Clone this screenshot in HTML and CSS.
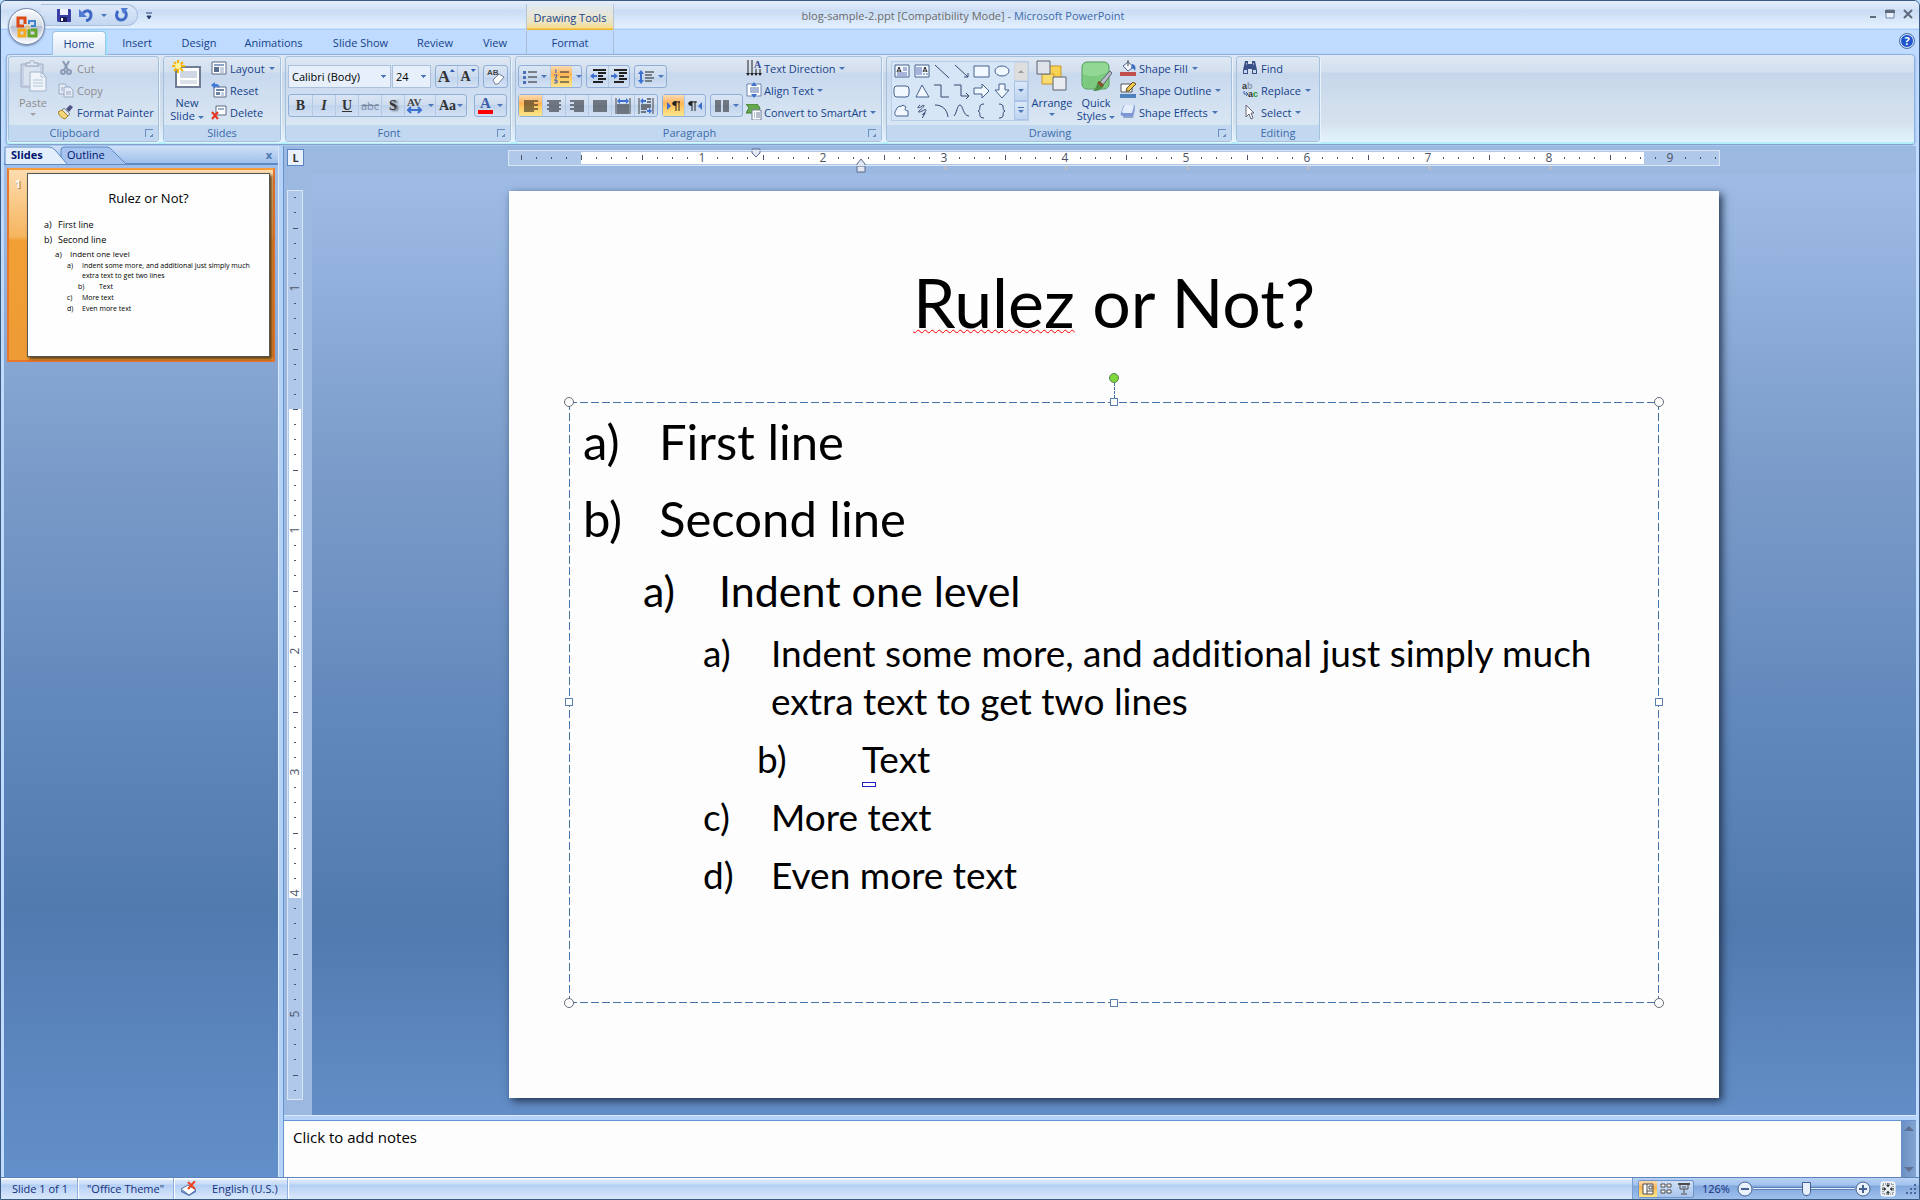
FILE: index.html
```html
<!DOCTYPE html>
<html lang="en">
<head>
    <meta charset="UTF-8">
    <meta name="viewport" content="width=device-width, initial-scale=1.0">
    <title>blog-sample-2.ppt [Compatibility Mode] - Microsoft PowerPoint</title>
    <link rel="stylesheet" href="styles.css">
</head>
<body>
<div class="window">
    <header class="titlebar">
        <div class="qat">
            <button class="icon-btn" aria-label="Save">
                <svg width="14" height="14" viewBox="0 0 14 14"><path d="M0 1h13l1 1v12H1l-1-1z" fill="#3a3fa5"/><path d="M3 1h8v6H3z" fill="#eef3ff"/><path d="M3 9h7v5H3z" fill="#1c1e55"/><path d="M4 10h2v3H4z" fill="#fff"/></svg>
            </button>
            <button class="icon-btn" aria-label="Undo">
                <svg width="14" height="14" viewBox="0 0 14 14"><path d="M4 5c4-4 8-2 8 2 0 3-2 5-5 6" fill="none" stroke="#3f69c4" stroke-width="3"/><path d="M0 1v8h8z" fill="#4f7bd2"/></svg>
            </button>
            <span class="arrow"></span>
            <button class="icon-btn" aria-label="Repeat">
                <svg width="13" height="14" viewBox="0 0 13 14"><path d="M3 3c-3 4-1 9 3 9s7-4 4-9" fill="none" stroke="#3f69c4" stroke-width="3"/><path d="M6 0h7l-5 6z" fill="#4f7bd2"/></svg>
            </button>
        </div>
        <button class="icon-btn qat-more" aria-label="Customize Quick Access Toolbar">
            <svg width="6" height="8" viewBox="0 0 6 8"><path d="M0 1h6M1 4h4L3 7z" stroke="#25416f" fill="#25416f"/></svg>
        </button>
        <div class="context-title">Drawing Tools</div>
        <h1 class="doc-title">blog-sample-2.ppt [Compatibility Mode] - <span>Microsoft PowerPoint</span></h1>
        <div class="window-buttons">
            <button class="icon-btn" aria-label="Minimize"><svg width="8" height="10" viewBox="0 0 8 10"><path d="M1 8h6" stroke="#616b7c" stroke-width="2"/></svg></button>
            <button class="icon-btn" aria-label="Maximize"><svg width="10" height="10" viewBox="0 0 10 10"><path d="M1 1h8v8H1z" fill="#e8f1fc" stroke="#7189ab"/><path d="M0 1h10v3H0z" fill="#616b7c"/></svg></button>
            <button class="icon-btn" aria-label="Close"><svg width="10" height="10" viewBox="0 0 10 10"><path d="M1 1l8 8M9 1L1 9" stroke="#616b7c" stroke-width="2"/></svg></button>
        </div>
    </header>

    <button class="office-button" aria-label="Office Button">
        <svg width="22" height="24" viewBox="0 0 22 24" fill="none" stroke-width="3">
            <path d="M9 9V3H2v8h6" stroke="#dc4a14"/>
            <path d="M13 9V6h6v5h-4" stroke="#3f86cf" stroke-width="2"/>
            <path d="M9 14v7H3v-6h6" stroke="#f5a81c"/>
            <path d="M13 14v7h7v-6h-5" stroke="#63a52a"/>
            <path d="M10 11h3v3h-3z" stroke="#f6c65a" stroke-width="1"/>
        </svg>
    </button>

    <nav class="tabs">
        <a href="#" class="tab tab-active">Home</a>
        <a href="#" class="tab">Insert</a>
        <a href="#" class="tab">Design</a>
        <a href="#" class="tab tab-wide">Animations</a>
        <a href="#" class="tab tab-wide">Slide Show</a>
        <a href="#" class="tab">Review</a>
        <a href="#" class="tab tab-view">View</a>
        <a href="#" class="tab tab-format">Format</a>
        <button class="help" aria-label="Help">?</button>
    </nav>

    <div class="ribbon">
        <section class="group clipboard">
            <div class="group-body">
                <button class="big disabled">
                    <svg width="28" height="32" viewBox="0 0 28 32"><path d="M2 4h22v23H2z" fill="#c6d2e3" stroke="#a2b0c6"/><path d="M5 7h16v18H5z" fill="#d9e3f0"/><path d="M7 6V3h4c0-4 4-4 4 0h4v3z" fill="#dfe8f2" stroke="#95a6bf"/><path d="M11 12h11l5 5v14H11z" fill="#eff4fa" stroke="#a5b4ca"/><path d="M22 12v5h5M14 20h10M14 23h10M14 26h10" fill="none" stroke="#b6c4d8"/></svg>
                    <span>Paste</span><span class="arrow"></span>
                </button>
                <div class="stack">
                    <button class="small disabled"><svg width="16" height="16" viewBox="0 0 16 16" fill="none" stroke="#8b9bb5"><path d="M5 1l5 9M11 1L6 10" stroke-width="2"/><circle cx="5" cy="12" r="2" stroke-width="2"/><circle cx="11" cy="12" r="2" stroke-width="2"/></svg>Cut</button>
                    <button class="small disabled"><svg width="16" height="16" viewBox="0 0 16 16" fill="#e4ebf4" stroke="#9aabc4"><path d="M1 2h6l3 3v7H1z"/><path d="M6 5h6l3 3v7H6zM8 10h5M8 12h5M3 6h2M3 8h2"/></svg>Copy</button>
                    <button class="small"><svg width="16" height="16" viewBox="0 0 16 16"><path d="M12 1l3 2-4 5-3-3z" fill="#4b5387"/><path d="M6 4l6 6-2 2-6-6z" fill="#dde3ea" stroke="#7c8592"/><path d="M4 6l6 6-3 3C3 14 1 11 0 8z" fill="#f4d77d" stroke="#a77f29"/></svg>Format Painter</button>
                </div>
            </div>
            <footer>Clipboard<button class="launcher" aria-label="Clipboard options"></button></footer>
        </section>

        <section class="group slides">
            <div class="group-body">
                <button class="big">
                    <svg width="30" height="32" viewBox="0 0 30 32"><path d="M4 7h24v20H4z" fill="#fff" stroke="#6f7e95" stroke-width="2"/><path d="M8 11h17v7H8z" fill="#cfd7e5"/><path d="M8 21h17M8 23h17" stroke="#b9c3d4"/><path d="M6 0v13M0 6h13M2 2l9 9M11 2l-9 9" stroke="#f3b400" stroke-width="2"/><circle cx="6" cy="6" r="3" fill="#fff3a0"/></svg>
                    <span>New</span><span>Slide <i class="arrow"></i></span>
                </button>
                <div class="stack">
                    <button class="small"><svg width="16" height="16" viewBox="0 0 16 16"><path d="M1 2h14v12H1z" fill="#fff" stroke="#5b6b85"/><path d="M3 4h10v2H3z" fill="#8da2c4"/><path d="M3 7h5v5H3z" fill="#5c6f92"/><path d="M9 8h4M9 10h4M9 12h4" stroke="#8da2c4"/></svg>Layout<i class="arrow"></i></button>
                    <button class="small"><svg width="16" height="16" viewBox="0 0 16 16"><path d="M3 5h12v10H3z" fill="#fff" stroke="#5b6b85"/><path d="M5 7h8v2H5zM5 10h4v3H5z" fill="#6e82a6"/><path d="M10 11h3M10 13h3" stroke="#8da2c4"/><path d="M0 3l4-3v2c4 0 5 2 4 4-1-1-2-2-4-1v2z" fill="#3f76d8"/></svg>Reset</button>
                    <button class="small"><svg width="16" height="16" viewBox="0 0 16 16"><path d="M5 2h10v9H5z" fill="#fff" stroke="#5b6b85"/><path d="M7 4h6v2H7z" fill="#9fb0cb"/><path d="M1 8l6 7M7 8l-6 7" stroke="#e8341c" stroke-width="2"/></svg>Delete</button>
                </div>
            </div>
            <footer>Slides</footer>
        </section>

        <section class="group font">
            <div class="group-body rows">
                <div class="row">
                    <select class="font-name" aria-label="Font"><option>Calibri (Body)</option></select>
                    <select class="font-size" aria-label="Font size"><option>24</option></select>
                    <div class="btns push narrow">
                        <button class="serif grow">A<svg width="5" height="4" viewBox="0 0 5 4"><path d="M0 3l2-3 3 3z" fill="#2f5fb0"/></svg></button>
                        <button class="serif shrink">A<svg width="5" height="4" viewBox="0 0 5 4"><path d="M0 0h5L2 3z" fill="#2f5fb0"/></svg></button>
                    </div>
                    <div class="btns">
                        <button aria-label="Clear formatting"><svg width="18" height="17" viewBox="0 0 18 17"><text x="0" y="7" font-family="Liberation Sans" font-size="8" font-weight="bold" fill="#444">AB</text><path d="M6 12l6-6 5 3-6 7H8z" fill="#fff" stroke="#71819c"/></svg></button>
                    </div>
                </div>
                <div class="row">
                    <div class="btns">
                        <button class="serif">B</button>
                        <button class="serif"><i>I</i></button>
                        <button class="serif"><u>U</u></button>
                        <button class="strike"><s>abc</s></button>
                        <button class="serif glow">S</button>
                        <button class="wide serif" aria-label="Character spacing"><svg width="18" height="17" viewBox="0 0 18 17"><text x="1" y="9" font-family="Liberation Serif" font-size="11" font-weight="bold" fill="#444">AV</text><path d="M3 13h11M5 10l-3 3 3 3M12 10l3 3-3 3" fill="none" stroke="#3b6fd0" stroke-width="2"/></svg><i class="arrow"></i></button>
                        <button class="wide serif aa">Aa<i class="arrow"></i></button>
                    </div>
                    <div class="btns push">
                        <button class="wide font-color serif"><span>A</span><i class="arrow"></i></button>
                    </div>
                </div>
            </div>
            <footer>Font<button class="launcher" aria-label="Font options"></button></footer>
        </section>

        <section class="group paragraph">
            <div class="group-body">
                <div class="rows">
                    <div class="row">
                        <div class="btns">
                            <button class="wide" aria-label="Bullets"><svg width="14" height="14" viewBox="0 0 14 14"><path d="M5 2h9M5 7h9M5 12h9" stroke="#222"/><path d="M0 1h3v3H0zM0 6h3v3H0zM0 11h3v3H0z" fill="#4c6fb8"/></svg><i class="arrow"></i></button>
                            <button class="wide split" aria-label="Numbering"><span class="on"><svg width="15" height="15" viewBox="0 0 15 15"><path d="M6 3h9M6 8h9M6 13h9" stroke="#222"/><path d="M1 1h1v3M0 6h3v1L1 9h2M0 11h3v3H0M1 12h2" fill="none" stroke="#3c62b5"/></svg></span><i class="arrow"></i></button>
                        </div>
                        <div class="btns narrow">
                            <button aria-label="Decrease indent"><svg width="16" height="16" viewBox="0 0 16 16"><path d="M3 1h13M8 4h8M8 7h5M8 10h8M3 13h10" stroke="#222" stroke-width="2"/><path d="M0 7l4-3v2h3v2H4v2z" fill="#3b6fd0"/></svg></button>
                            <button aria-label="Increase indent"><svg width="16" height="16" viewBox="0 0 16 16"><path d="M3 1h13M8 4h8M8 7h5M8 10h8M3 13h10" stroke="#222" stroke-width="2"/><path d="M7 7L3 4v2H0v2h3v2z" fill="#3b6fd0"/></svg></button>
                        </div>
                        <div class="btns">
                            <button class="wide" aria-label="Line spacing"><svg width="16" height="16" viewBox="0 0 16 16"><path d="M7 3h9M7 6h7M7 9h9M7 12h7" stroke="#222"/><path d="M0 5l3-4 3 4H4v6h2l-3 4-3-4h2V5z" fill="#3b6fd0"/></svg><i class="arrow"></i></button>
                        </div>
                    </div>
                    <div class="row">
                        <div class="btns">
                            <button class="on" aria-label="Align left"><svg width="14" height="12" viewBox="0 0 14 12"><path d="M0 1h14M0 3h10M0 5h14M0 7h10M0 9h14M0 11h10" stroke="#111"/></svg></button>
                            <button aria-label="Center"><svg width="14" height="12" viewBox="0 0 14 12"><path d="M0 1h14M2 3h10M0 5h14M2 7h10M0 9h14M2 11h10" stroke="#111"/></svg></button>
                            <button aria-label="Align right"><svg width="14" height="12" viewBox="0 0 14 12"><path d="M0 1h14M4 3h10M0 5h14M4 7h10M0 9h14M4 11h10" stroke="#111"/></svg></button>
                            <button aria-label="Justify"><svg width="14" height="12" viewBox="0 0 14 12"><path d="M0 1h14M0 3h14M0 5h14M0 7h14M0 9h14M0 11h14" stroke="#111"/></svg></button>
                            <button aria-label="Distribute"><svg width="16" height="16" viewBox="0 0 16 16"><path d="M1 0v16M15 0v16" stroke="#444"/><path d="M2 7h12M2 9h12M2 11h12M2 13h12M2 15h12" stroke="#111"/><path d="M2 3l3-3v2h6V0l3 3-3 3V4H5v2z" fill="#3b6fd0"/></svg></button>
                            <button aria-label="Low justify"><svg width="16" height="16" viewBox="0 0 16 16"><path d="M1 0v16M15 0v16" stroke="#444"/><path d="M9 1h4M9 4h4M3 7h10M3 9h10M3 11h6M3 14h5" stroke="#111"/><path d="M2 3l3-3v2h3v2H5v2zM14 13l-3-3v2H9v2h2v2z" fill="#3b6fd0"/></svg></button>
                        </div>
                        <div class="btns narrow">
                            <button class="on" aria-label="Left to right"><svg width="14" height="12" viewBox="0 0 14 12"><path d="M0 2l4 4-4 4z" fill="#3b6fd0"/><path d="M9 1v10M12 1v10M7 2h6" stroke="#222"/><path d="M9 1C4 1 4 6 9 6z" fill="#222"/></svg></button>
                            <button aria-label="Right to left"><svg width="14" height="12" viewBox="0 0 14 12"><path d="M14 2l-4 4 4 4z" fill="#3b6fd0"/><path d="M4 1v10M7 1v10M3 2h6" stroke="#222"/><path d="M4 1C-1 1-1 6 4 6z" fill="#222"/></svg></button>
                        </div>
                        <div class="btns">
                            <button class="wide" aria-label="Columns"><svg width="14" height="12" viewBox="0 0 14 12"><path d="M0 1h6M0 3h6M0 5h6M0 7h6M0 9h6M0 11h6M8 1h6M8 3h6M8 5h6M8 7h6M8 9h6M8 11h6" stroke="#111"/></svg><i class="arrow"></i></button>
                        </div>
                    </div>
                </div>
                <div class="stack">
                    <button class="small"><svg width="16" height="16" viewBox="0 0 16 16"><path d="M2 0v15M6 0v15M10 9v6M14 9v6" stroke="#222"/><path d="M0 13h4l-2 3zM4 13h4l-2 3zM8 13h4l-2 3zM12 13h4l-2 3z" fill="#222"/><text x="8" y="8" font-family="Liberation Serif" font-size="10" font-weight="bold" fill="#3a4a90">A</text></svg>Text Direction<i class="arrow"></i></button>
                    <button class="small"><svg width="16" height="16" viewBox="0 0 16 16"><path d="M1 2h14v12H1z" fill="#fff" stroke="#6f86b0"/><path d="M4 6h9M4 8h9M4 10h9" stroke="#5470ae"/><path d="M8 0l3 4H5zM8 16l3-4H5z" fill="#3b6fd0"/></svg>Align Text<i class="arrow"></i></button>
                    <button class="small"><svg width="16" height="16" viewBox="0 0 16 16"><path d="M0 0h11l3 4-3 5H0l3-5z" fill="#69a94e" stroke="#3f7d35"/><path d="M6 6h9v10H6z" fill="#fff" stroke="#70809a"/><path d="M8 9h1M8 11h1M8 13h1M10 9h4M10 11h4M10 13h4" stroke="#70809a"/></svg>Convert to SmartArt<i class="arrow"></i></button>
                </div>
            </div>
            <footer>Paragraph<button class="launcher" aria-label="Paragraph options"></button></footer>
        </section>

        <section class="group drawing">
            <div class="group-body">
                <div class="gallery">
                    <div class="shapes">
                        <svg viewBox="0 0 20 20"><path d="M3 4h14v12H3z"/><path d="M11 7h4M11 9h4M5 12h10M5 14h10" stroke="#5c6fb5"/><path d="M5 11l2-5 2 5M6 10h3" stroke="#222"/></svg>
                        <svg viewBox="0 0 20 20"><path d="M3 4h14v12H3z"/><path d="M5 6v8M7 6v8M9 6v8M12 12v2M15 12v2" stroke="#5c6fb5"/><path d="M11 11l2-5 2 5M12 10h3" stroke="#222"/></svg>
                        <svg viewBox="0 0 20 20"><path d="M3 4l14 13" class="line"/></svg>
                        <svg viewBox="0 0 20 20"><path d="M3 4l13 12M16 12v4h-4" class="line"/></svg>
                        <svg viewBox="0 0 20 20"><path d="M2 5h15v11H2z"/></svg>
                        <svg viewBox="0 0 20 20"><ellipse cx="10" cy="10" rx="7" ry="5"/></svg>
                        <svg viewBox="0 0 20 20"><rect x="2" y="5" width="15" height="11" rx="3"/></svg>
                        <svg viewBox="0 0 20 20"><path d="M10 4l7 12H4z"/></svg>
                        <svg viewBox="0 0 20 20"><path d="M2 4h7v12h8" class="line"/></svg>
                        <svg viewBox="0 0 20 20"><path d="M2 4h7v11h8M14 12l3 3-3 3" class="line"/></svg>
                        <svg viewBox="0 0 20 20"><path d="M2 7h8V3l7 7-7 7v-4H2z"/></svg>
                        <svg viewBox="0 0 20 20"><path d="M7 3h6v6h4l-7 8-7-8h4z"/></svg>
                        <svg viewBox="0 0 20 20"><path d="M4 9c1-3 3-4 6-4l1-1 3 2c-2 3-1 3 2 4v5H4c-2-2-1-4 0-6z"/></svg>
                        <svg viewBox="0 0 20 20"><path d="M8 4c-4 3-2 4 2 1 4-2 2 1-3 5-2 2 2 1 5-1 4-2 1 3-1 4s2 1 2-1-1 4-3 5" class="line"/></svg>
                        <svg viewBox="0 0 20 20"><path d="M3 4c7 0 12 4 13 12" class="line"/></svg>
                        <svg viewBox="0 0 20 20"><path d="M2 15C5 12 5 4 8 4s3 11 9 11" class="line"/></svg>
                        <svg viewBox="0 0 20 20"><path d="M12 3c-7 0-2 6-6 7 4 1-1 7 6 7" class="line"/></svg>
                        <svg viewBox="0 0 20 20"><path d="M7 3c7 0 2 6 6 7-4 1 1 7-6 7" class="line"/></svg>
                    </div>
                    <div class="gallery-scroll">
                        <button class="up" aria-label="Previous shapes"><i class="arrow"></i></button>
                        <button aria-label="Next shapes"><i class="arrow"></i></button>
                        <button class="more" aria-label="More shapes"><i class="arrow"></i></button>
                    </div>
                </div>
                <button class="big arrange">
                    <svg width="32" height="32" viewBox="0 0 32 32"><path d="M11 6h14v14H11z" fill="#f7d253" stroke="#c9952c"/><path d="M6 14h12v10H6z" fill="#f9dc70" stroke="#c9952c"/><path d="M1 1h13v13H1z" fill="#dfe3ea" stroke="#5b6270"/><path d="M17 17h13v13H17z" fill="#e9ecf1" stroke="#5b6270"/></svg>
                    <span>Arrange</span><span class="arrow"></span>
                </button>
                <button class="big quick">
                    <svg width="32" height="32" viewBox="0 0 32 32"><rect x="2" y="2" width="27" height="27" rx="5" fill="#93d794" stroke="#4d9a58"/><path d="M3 14c8 4 18 2 25-3v13c0 3-1 4-4 4H7c-3 0-4-1-4-4z" fill="#7bca80"/><path d="M30 11l2 2-9 12-3-3z" fill="#b9bfc8" stroke="#5d6470"/><path d="M20 21l4 4c-2 5-6 6-11 6 4-3 3-8 7-10z" fill="#4e9148"/><path d="M19 21l5 4-2 2-5-4z" fill="#8a4f27"/></svg>
                    <span>Quick</span><span>Styles <i class="arrow"></i></span>
                </button>
                <div class="stack">
                    <button class="small"><svg width="16" height="16" viewBox="0 0 16 16"><path d="M3 6l5-4 6 5-6 4z" fill="#eef3fb" stroke="#55688c"/><path d="M8 0v6" stroke="#444"/><path d="M12 4c4 1 4 4 3 7-1-2-2-3-4-3z" fill="#3f6fc0"/><path d="M0 12h16v4H0z" fill="#c0504d"/></svg>Shape Fill<i class="arrow"></i></button>
                    <button class="small"><svg width="16" height="16" viewBox="0 0 16 16"><path d="M1 2h11v8H1z" fill="#fff" stroke="#555"/><path d="M6 9l1-3 6-6 3 2-7 7z" fill="#f1c84f" stroke="#604a20"/><path d="M0 12h16v4H0z" fill="#4f81bd"/></svg>Shape Outline<i class="arrow"></i></button>
                    <button class="small"><svg width="16" height="16" viewBox="0 0 16 16"><path d="M4 5h11l-2 9H3z" fill="#8fa3cf"/><path d="M5 1h8c2 0 2 1 2 2l-2 7c0 2-1 2-3 2H3c-2 0-3-1-2-3l2-6c0-1 1-2 2-2z" fill="#7d97d6"/><path d="M5 1h8l1 1-2 7H3L2 8l2-6z" fill="#e3ecfb"/></svg>Shape Effects<i class="arrow"></i></button>
                </div>
            </div>
            <footer>Drawing<button class="launcher" aria-label="Drawing options"></button></footer>
        </section>

        <section class="group editing">
            <div class="group-body">
                <div class="stack">
                    <button class="small"><svg width="16" height="16" viewBox="0 0 16 16"><path d="M3 1h3v3h4V1h3l2 9v4h-5V9H6v5H1v-4z" fill="#3a5288"/><path d="M2 10h3v3H2zM11 10h3v3h-3zM4 3h1v3M11 3h1v3" fill="#c8d6ee"/></svg>Find</button>
                    <button class="small"><svg width="16" height="16" viewBox="0 0 16 16"><text x="0" y="7" font-family="Liberation Sans" font-size="9" font-weight="bold" fill="#333">a<tspan fill="#8a97ad">b</tspan></text><text x="6" y="15" font-family="Liberation Sans" font-size="9" font-weight="bold" fill="#333">a<tspan fill="#1f9a2b">c</tspan></text><path d="M2 9v3h3M4 10l2 2-2 2" fill="none" stroke="#3b5fa0"/></svg>Replace<i class="arrow"></i></button>
                    <button class="small"><svg width="16" height="16" viewBox="0 0 16 16"><path d="M4 1l8 8H9l2 5-2 1-2-5-3 3z" fill="#fff" stroke="#667"/></svg>Select<i class="arrow"></i></button>
                </div>
            </div>
            <footer>Editing</footer>
        </section>
    </div>

    <main class="workspace">
        <aside class="side">
            <div class="side-tabs">
                <svg class="side-shape" width="124" height="18" viewBox="0 0 124 18">
                    <path d="M57 18V4q0-3 3-3h43q3 0 5 3l14 14" fill="#a5c3ec" stroke="#5b8ac4"/>
                    <path d="M1 18V1h44q4 0 7 4l11 13" fill="#e3eefc" stroke="#5b8ac4"/>
                </svg>
                <a href="#" class="side-tab current">Slides</a>
                <a href="#" class="side-tab">Outline</a>
                <button class="close" aria-label="Close pane">x</button>
            </div>
            <div class="thumb-row">
                <span class="thumb-no">1</span>
                <div class="thumb">
                    <h3>Rulez or Not?</h3>
                    <ol class="lines">
                        <li class="l1"><span>a)</span>First line</li>
                        <li class="l1"><span>b)</span>Second line</li>
                        <li class="l2"><span>a)</span>Indent one level</li>
                        <li class="l3"><span>a)</span><p>Indent some more, and additional just simply much<br>extra text to get two lines</p></li>
                        <li class="l3 deeper"><span>b)</span>Text</li>
                        <li class="l3"><span>c)</span>More text</li>
                        <li class="l3"><span>d)</span>Even more text</li>
                    </ol>
                </div>
            </div>
        </aside>

        <div class="editor">
            <div class="canvas">
                <div class="corner"><span>L</span></div>
                <div class="ruler-x-track"><svg id="rulerX" class="ruler-x" viewBox="0 0 1210 14"></svg></div>
                <div class="ruler-y-track"><svg id="rulerY" class="ruler-y" viewBox="0 0 14 908"></svg></div>
                <div class="stage">
                    <article class="slide">
                        <h2><span class="misspelled">Rulez</span> or Not?</h2>
                        <div class="textbox">
                            <ol class="lines">
                                <li class="l1"><span>a)</span>First line</li>
                                <li class="l1"><span>b)</span>Second line</li>
                                <li class="l2"><span>a)</span>Indent one level</li>
                                <li class="l3"><span>a)</span><p>Indent some more, and additional just simply much<br>extra text to get two lines</p></li>
                                <li class="l3 deeper"><span>b)</span><p class="tagged">Text</p></li>
                                <li class="l3"><span>c)</span>More text</li>
                                <li class="l3"><span>d)</span>Even more text</li>
                            </ol>
                            <i class="handle round nw"></i><i class="handle n"></i><i class="handle round ne"></i>
                            <i class="handle w"></i><i class="handle e"></i>
                            <i class="handle round sw"></i><i class="handle s"></i><i class="handle round se"></i>
                            <i class="rotate"></i>
                        </div>
                    </article>
                </div>
            </div>
            <div class="notes">
                <textarea aria-label="Notes">Click to add notes</textarea>
                <div class="notes-scroll"><i class="tri up"></i><i class="tri"></i></div>
            </div>
        </div>
    </main>

    <footer class="status">
        <span class="cell">Slide 1 of 1</span>
        <span class="cell">"Office Theme"</span>
        <span class="cell lang"><svg width="17" height="15" viewBox="0 0 17 15"><path d="M1 8l7-4 8 5-7 5z" fill="#fff" stroke="#56709f"/><path d="M1 9v2l8 4 7-4V9l-7 5z" fill="#5878b8"/><path d="M8 1l7 7M15 0L8 8" stroke="#ef4423" stroke-width="2"/></svg>English (U.S.)</span>
        <div class="status-right">
            <div class="views">
                <button class="on" aria-label="Normal"><svg width="12" height="12" viewBox="0 0 12 12"><path d="M1 1h10v10H1zM5 1v10M5 8h6M7 3h3v3H7z" fill="#fff" stroke="#4d4d4d"/></svg></button>
                <button aria-label="Slide sorter"><svg width="12" height="12" viewBox="0 0 12 12"><path d="M1 1h4v3H1zM7 1h4v3H7zM1 7h4v3H1zM7 7h4v3H7z" fill="#fff" stroke="#4d4d4d"/></svg></button>
                <button aria-label="Slide show"><svg width="12" height="12" viewBox="0 0 12 12"><path d="M0 1h12" stroke="#4d4d4d" stroke-width="2"/><path d="M2 2v4h8V2M4 4h4M6 6v4M3 11h6" fill="none" stroke="#4d4d4d"/></svg></button>
            </div>
            <label for="zoom">126%</label>
            <button class="round-btn" aria-label="Zoom out"><svg width="16" height="16" viewBox="0 0 16 16"><circle cx="8" cy="8" r="7" fill="#e9f1fc" stroke="#46618f"/><path d="M4 8h8" stroke="#46618f" stroke-width="2"/></svg></button>
            <input type="range" id="zoom" min="0" max="100" value="53">
            <button class="round-btn" aria-label="Zoom in"><svg width="16" height="16" viewBox="0 0 16 16"><circle cx="8" cy="8" r="7" fill="#e9f1fc" stroke="#46618f"/><path d="M4 8h8M8 4v8" stroke="#46618f" stroke-width="2"/></svg></button>
            <button class="round-btn fit" aria-label="Fit slide to window"><svg width="16" height="16" viewBox="0 0 16 16"><rect x="1" y="1" width="14" height="14" rx="2" fill="#e9eef5" stroke="#fff"/><path d="M3 13V3h10v10z" fill="none" stroke="#555" stroke-dasharray="1 1"/><path d="M8 2v4M8 14v-4M2 8h4M14 8h-4" stroke="#333"/><path d="M6 4h4L8 6zM6 12h4l-2-2zM4 6v4l2-2zM12 6v4l-2-2z" fill="#333"/></svg></button>
            <svg class="grip" width="12" height="12" viewBox="0 0 12 12"><path d="M9 1h2v2H9zM9 5h2v2H9zM5 5h2v2H5zM9 9h2v2H9zM5 9h2v2H5zM1 9h2v2H1z" fill="#4a6796"/></svg>
        </div>
    </footer>
</div>

<script>
    const INCH = 121;

    // ticks every 1/8 inch, a longer one at the half, a number at the full inch
    function ticks(length, zero, draw) {
        let out = '';
        for (let i = Math.ceil((8 - zero * 8) / INCH); zero + i * INCH / 8 < length; i++) {
            const pos = Math.round(zero + i * INCH / 8);
            if (i !== 0 && i % 8 === 0) {
                out += draw(pos, 0, Math.abs(i / 8));
            } else {
                out += draw(pos, i % 4 === 0 ? 5 : 2);
            }
        }
        return out;
    }

    document.getElementById('rulerX').innerHTML =
        '<rect class="page" x="72" y="1" width="1063" height="12"/>' +
        ticks(1210, 72, (x, h, n) => n
            ? `<text x="${x}" y="11">${n}</text>`
            : `<rect x="${x}" y="${h === 5 ? 4 : 6}" width="1" height="${h}"/>`) +
        [3, 4, 5, 6, 7, 8].map(n => `<rect class="stop" x="${72 + n * INCH}" y="14" width="3" height="5"/>`).join('') +
        '<path class="marker" d="M243-2h8v4l-4 4-4-4z"/>' +
        '<path class="marker" d="M348 13l4-5 4 5v8h-8zM348 15h8"/>';

    document.getElementById('rulerY').innerHTML =
        '<rect class="page" x="1" y="218" width="12" height="489"/>' +
        ticks(908, 218, (y, h, n) => n
            ? `<text transform="translate(11 ${y}) rotate(-90)">${n}</text>`
            : `<rect x="${h === 5 ? 5 : 6}" y="${y}" width="${h}" height="1"/>`);
</script>
</body>
</html>
```

FILE: styles.css
```css
* {
    box-sizing: border-box;
}

body {
    margin: 0;
    font-family: "Open Sans", "Noto Sans", sans-serif;
    font-size: 11px;
    color: #15428b;
    background: #bfdbff;
}

button, select, textarea {
    font: inherit;
    color: inherit;
    margin: 0;
    padding: 0;
    border: 0;
    background: none;
}

a {
    color: inherit;
    text-decoration: none;
}

h1, h2, h3, p, ol {
    margin: 0;
    padding: 0;
    font-weight: normal;
}

svg {
    display: block;
    flex: none;
}

.window {
    position: relative;
    display: flex;
    flex-direction: column;
    height: 100vh;
    border: 1px solid #3b5a82;
    border-radius: 6px 6px 0 0;
    overflow: hidden;
}

.arrow {
    display: inline-block;
    flex: none;
    width: 0;
    height: 0;
    border: 3px solid transparent;
    border-top-color: #4a76b8;
    border-bottom: 0;
    vertical-align: middle;
}

.icon-btn {
    display: flex;
}

/* title bar */
.titlebar {
    display: grid;
    grid-template-columns: 137px 388px 88px 1fr;
    align-items: center;
    height: 29px;
    background: linear-gradient(#e3edfb, #d5e3f6 8px, #c9dcf4 9px, #d9e8fa 20px, #e4f1ff 27px, #a9cdf5 28px);
}

.titlebar > * {
    grid-row: 1;
}

.qat {
    grid-column: 1;
    display: flex;
    align-items: center;
    gap: 8px;
    height: 22px;
    margin-left: 40px;
    margin-bottom: 1px;
    padding-left: 16px;
    border: 1px solid #a9c0df;
    border-left: 0;
    border-radius: 0 11px 11px 0;
    background: linear-gradient(#dce8f8, #c3d7f0);
}

.qat-more {
    grid-column: 2;
    justify-self: start;
    margin-left: 8px;
}

.context-title {
    grid-column: 3;
    align-self: end;
    height: 26px;
    line-height: 28px;
    text-align: center;
    border: solid #b8c4d2;
    border-width: 0 1px;
    background: linear-gradient(#dfe9f5, #ede4c3 18px, #f6dc8c 24px, #f0b429 25px);
    white-space: nowrap;
}

.doc-title {
    grid-column: 1 / -1;
    justify-self: center;
    padding-left: 6px;
    font-size: 11px;
    line-height: 16px;
    color: #696969;
}

.doc-title span {
    color: #3e6aaa;
}

.window-buttons {
    grid-column: 4;
    justify-self: end;
    display: flex;
    gap: 8px;
    padding-right: 6px;
    padding-bottom: 3px;
}

.office-button {
    position: absolute;
    left: 7px;
    top: 7px;
    display: flex;
    align-items: center;
    justify-content: center;
    width: 37px;
    height: 37px;
    border: 1px solid #7286a8;
    border-radius: 50%;
    background: linear-gradient(#fbfcfe, #d3dae6 48%, #b5c0d1 50%, #fafcff);
    box-shadow: 0 1px 2px #6f86aa, inset 0 0 2px 1px #fff;
}

/* tabs */
.tabs {
    display: flex;
    height: 24px;
    padding-left: 51px;
    padding-top: 1px;
    background: #bfdbff;
    line-height: 23px;
    text-align: center;
}

.tab {
    width: 62px;
}

.tab-active {
    position: relative;
    width: 54px;
    height: 24px;
    z-index: 1;
    border: 1px solid #9fc3e8;
    border-bottom: 0;
    border-radius: 4px 4px 0 0;
    background: linear-gradient(#fbfdff, #dce8f5);
    box-shadow: 1px 0 2px #8eeaf5;
}

.tab-wide {
    width: 87px;
}

.tab-view {
    width: 58px;
}

.tab-format {
    width: 88px;
    margin-left: 2px;
    border: solid #a9bcd6;
    border-width: 0 1px;
}

.help {
    width: 14px;
    height: 14px;
    margin: 3px 5px 0 auto;
    border: 1px solid #dce9fb;
    border-radius: 50%;
    outline: 1px solid #4a6ea8;
    background: #1f55cc;
    color: #fff;
    font-weight: bold;
    line-height: 12px;
}

/* ribbon */
.ribbon {
    display: flex;
    gap: 4px;
    height: 90px;
    margin: 0 4px 0 5px;
    padding: 1px;
    border: 1px solid #8db2e3;
    border-bottom: 2px solid #b3effb;
    border-radius: 4px;
    background: linear-gradient(#dee8f3, #d2dfee 17px, #c7d7ea 18px, #d5e2ee 68px, #e2f3fc 86px);
    box-shadow: 0 1px 2px #6d8dbb;
}

.group {
    display: flex;
    flex-direction: column;
    flex: none;
    height: 86px;
    border: 1px solid #a3c0dd;
    border-radius: 3px;
    background: linear-gradient(#dee7f3, #d3dfee 15px, #c8d8ed 16px, #d9e6f3 68px);
    box-shadow: 1px 1px 0 #eaf3fc;
    overflow: hidden;
}

.clipboard { width: 151px; }
.slides { width: 118px; }
.font { width: 226px; }
.paragraph { width: 367px; }
.drawing { width: 346px; }
.editing { width: 84px; }

.group-body {
    display: flex;
    flex: 1;
    padding: 0 2px;
}

.group footer {
    position: relative;
    height: 16px;
    line-height: 15px;
    text-align: center;
    color: #3e6aaa;
    background: #c1d8f0;
}

.clipboard footer, .font footer, .paragraph footer, .drawing footer {
    padding-right: 18px;
}

.launcher {
    position: absolute;
    right: 5px;
    top: 4px;
    width: 8px;
    height: 8px;
    border: solid #6b8fbe;
    border-width: 1px 0 0 1px;
    background: linear-gradient(135deg, transparent 45%, #6b8fbe 45%);
    background-size: 5px 5px;
    background-position: 3px 3px;
    background-repeat: no-repeat;
}

.big {
    display: flex;
    flex-direction: column;
    align-items: center;
    width: 44px;
    padding-top: 3px;
    line-height: 13px;
    white-space: nowrap;
}

.big svg {
    margin-bottom: 4px;
}

.big > .arrow {
    margin-top: 4px;
}

.slides .big {
    width: 42px;
}

.stack {
    display: flex;
    flex-direction: column;
    padding-left: 3px;
}

.small {
    display: flex;
    align-items: center;
    gap: 3px;
    height: 22px;
    white-space: nowrap;
}

.small .arrow {
    margin-left: 1px;
}

.paragraph .small {
    gap: 2px;
}

.disabled {
    color: #8d8d8d;
}

.disabled .arrow {
    border-top-color: #a0a0a0;
}

.rows {
    display: flex;
    flex-direction: column;
    gap: 6px;
    padding-top: 8px;
}

.font .rows {
    padding: 8px 3px 0 2px;
}

.row {
    display: flex;
    gap: 4px;
}

.btns {
    display: flex;
    flex: none;
    height: 23px;
    border: 1px solid #8fafd8;
    border-radius: 3px;
    background: linear-gradient(#dbe6f4, #ccdbef 50%, #c0d3ec 50%, #d3e1f3);
}

.btns button {
    display: flex;
    align-items: center;
    justify-content: center;
    width: 23px;
    color: #333;
}

.btns button + button {
    border-left: 1px solid #b3c9e6;
}

.narrow button {
    width: 21px;
}

.btns .wide {
    width: 31px;
    gap: 4px;
}

.on {
    background: linear-gradient(#fbdbb5, #feb456 40%, #ffcc66 60%, #fde48a);
}

.push {
    margin-left: auto;
}

.split .on {
    display: flex;
    align-items: center;
    padding: 0 3px;
    height: 21px;
}

.btns .serif {
    font-family: "Liberation Serif", serif;
    font-weight: bold;
    font-size: 14px;
}

.btns .grow {
    font-size: 17px;
}

.grow svg, .shrink svg {
    align-self: flex-start;
    margin-top: 3px;
}

.btns .strike {
    font-size: 11px;
    color: #7b8aa3;
}

.glow {
    text-shadow: 2px 1px 2px #555;
}

.btns .aa {
    gap: 1px;
}

.font-color span {
    font-size: 15px;
    line-height: 13px;
    padding: 0 2px;
    color: #3c5fa8;
    border-bottom: 4px solid #f00;
}

.font-name, .font-size {
    flex: none;
    height: 23px;
    padding-left: 3px;
    border: 1px solid #abc1de;
    border-radius: 0;
    color: #000;
    appearance: none;
    background: linear-gradient(#4a76b8, #4a76b8) right 4px top 9px / 5px 1px no-repeat,
        linear-gradient(#4a76b8, #4a76b8) right 5px top 10px / 3px 1px no-repeat,
        linear-gradient(#4a76b8, #4a76b8) right 6px top 11px / 1px 1px no-repeat, #e6effa;
}

.font-name {
    width: 103px;
}

.font-size {
    width: 39px;
    margin-left: -3px;
}

.gallery {
    display: flex;
    flex: none;
    align-self: flex-start;
    height: 60px;
    margin-top: 4px;
    margin-left: 2px;
    border: 1px solid #b6cdea;
    background: #d7e6f7;
}

.shapes {
    display: grid;
    grid-template-columns: repeat(6, 20px);
    grid-auto-rows: 20px;
    width: 122px;
}

.shapes svg {
    width: 20px;
    height: 20px;
    margin-top: -1px;
    fill: #f2f8ff;
    stroke: #44628c;
}

.shapes .line {
    fill: none;
    stroke: #34466e;
}

.gallery-scroll {
    display: flex;
    flex-direction: column;
}

.gallery-scroll button {
    display: flex;
    align-items: center;
    justify-content: center;
    flex: 1;
    width: 14px;
    border: 1px solid #a9c4e6;
    background: linear-gradient(#dbe8f8, #bfd4ef);
}

.gallery-scroll .up {
    background: #dedede;
    border-color: #cdd5df;
}

.up .arrow {
    border: 3px solid transparent;
    border-top: 0;
    border-bottom-color: #9a9a9a;
}

.gallery-scroll .more {
    flex-direction: column;
    gap: 2px;
}

.more::before {
    content: "";
    width: 6px;
    height: 1px;
    background: #4a76b8;
}

.arrange {
    width: 46px;
}

.quick {
    width: 42px;
}

/* workspace */
.workspace {
    display: flex;
    flex: 1;
    min-height: 0;
    margin: 2px 3px 0;
    background: #b5d2f8;
}

.side {
    flex: none;
    width: 275px;
    background: linear-gradient(#a3c0e9, #7f9fcc 27%, #648abd 52%, #517aaf 74%, #638fca);
    border-right: 1px solid #dbe9fb;
}

.side-tabs {
    position: relative;
    display: flex;
    align-items: center;
    height: 19px;
    border-bottom: 2px solid #5b8ac4;
    background: linear-gradient(#cfe0f7, #a0c0ea);
    color: #00156e;
}

.side-shape {
    position: absolute;
    left: 0;
    top: 0;
}

.side-tab {
    position: relative;
    margin-left: 16px;
}

.side-tab.current {
    width: 40px;
    margin-left: 7px;
    font-weight: bold;
}

.close {
    margin-left: auto;
    padding-right: 6px;
    font-weight: bold;
    color: #4a76b0;
}

.thumb-row {
    display: flex;
    margin: 3px 3px 0;
    padding: 3px 3px 3px 0;
    border: 2px solid #e8762c;
    border-top-color: #f59d3c;
    background: linear-gradient(#fddcae, #f6b55f 35%, #f2a035 37%, #ee9a35);
}

.thumb-no {
    width: 18px;
    padding-top: 3px;
    text-align: center;
    color: #fff;
    font-weight: bold;
    text-shadow: 1px 1px 1px #8a6a3a;
}

.thumb {
    flex: 1;
    height: 184px;
    border: 1px solid #555;
    background: #fefefe;
    box-shadow: 2px 2px 3px #5a3a10;
    color: #000;
    font-weight: 600;
}

.thumb h3 {
    margin: 15px 0 10px;
    font-size: 13px;
    line-height: 18px;
    text-align: center;
}

.lines {
    list-style: none;
}

.lines li {
    display: flex;
}

.lines span {
    flex: none;
}

.thumb .l1 { padding-left: 16px; font-size: 9px; line-height: 15px; }
.thumb .l2 { padding-left: 27px; font-size: 8px; line-height: 14px; }
.thumb .l3 { padding-left: 39px; font-size: 7px; line-height: 10px; margin-bottom: 1px; }
.thumb .deeper { padding-left: 50px; }
.thumb .l1 span { width: 14px; }
.thumb .l2 span { width: 15px; }
.thumb .l3 span { width: 15px; }
.thumb .deeper span { width: 21px; }

.editor {
    display: flex;
    flex: 1;
    flex-direction: column;
    min-width: 0;
    margin-left: 4px;
    border-left: 1px solid #6593cf;
}

.canvas {
    display: grid;
    grid-template-columns: 28px 1fr;
    grid-template-rows: 28px 1fr;
    flex: 1;
    min-height: 0;
    border-bottom: 1px solid #dbe9fb;
    background: #9ab8e0;
}

.corner {
    display: flex;
    align-items: center;
    justify-content: center;
    width: 17px;
    height: 17px;
    margin: 3px 0 0 3px;
    border: 1px solid #5b84c4;
    background: #e9f1fc;
    color: #333;
    font-weight: bold;
}

.ruler-x-track {
    display: flex;
    align-items: flex-start;
    justify-content: center;
    padding-top: 5px;
}

.ruler-y-track {
    display: flex;
    align-items: center;
    padding-left: 4px;
    min-height: 0;
}

.ruler-x, .ruler-y {
    flex: 0 1 auto;
    overflow: visible;
    background: #b0c8e9;
    outline: 1px solid #dbe6f5;
    fill: #4b5468;
    font-size: 12px;
    text-anchor: middle;
}

.ruler-x {
    width: 100%;
    max-width: 1210px;
}

.ruler-y {
    height: 100%;
    max-height: 908px;
    width: 14px;
}

.page {
    fill: #fff;
}

.stop {
    fill: #b4bccb;
}

.marker {
    fill: #e2e6ee;
    stroke: #596a92;
}

.stage {
    display: flex;
    align-items: center;
    justify-content: center;
    min-width: 0;
    background: linear-gradient(#9fbce6, #7f9fcc 27%, #648abd 55%, #517aaf 80%, #628dc6);
}

.slide {
    width: 100%;
    max-width: 1210px;
    aspect-ratio: 4 / 3;
    padding: 0 60px;
    background: #fdfdfd;
    box-shadow: 3px 3px 8px #22344f;
    color: #000;
    font-family: Lato, "Open Sans", sans-serif;
    font-variant-ligatures: none;
}

.slide h2 {
    height: 211px;
    padding-top: 66px;
    font-size: 68px;
    line-height: 90px;
    text-align: center;
}

.misspelled {
    text-decoration: underline wavy #f00 1px;
    text-underline-offset: 1px;
    text-decoration-skip-ink: none;
}

.textbox {
    position: relative;
    height: 601px;
    padding: 7px 14px;
    background:
        repeating-linear-gradient(90deg, #4572a7 0 8px, transparent 8px 11px) top / 100% 1px no-repeat,
        repeating-linear-gradient(90deg, #4572a7 0 8px, transparent 8px 11px) bottom / 100% 1px no-repeat,
        repeating-linear-gradient(#4572a7 0 8px, transparent 8px 11px) left / 1px 100% no-repeat,
        repeating-linear-gradient(#4572a7 0 8px, transparent 8px 11px) right / 1px 100% no-repeat;
}

.slide .l1 { font-size: 49px; line-height: 64px; margin-bottom: 13px; }
.slide .l2 { font-size: 43px; line-height: 56px; margin-bottom: 10px; padding-left: 60px; }
.slide .l3 { font-size: 37px; line-height: 48px; margin-bottom: 10px; padding-left: 120px; }
.slide .deeper { padding-left: 174px; }
.slide .l1 span { width: 76px; }
.slide .l2 span { width: 76px; }
.slide .l3 span { width: 68px; }
.slide .deeper span { width: 105px; }

.tagged {
    position: relative;
}

.tagged::after {
    content: "";
    position: absolute;
    left: 0;
    bottom: -4px;
    width: 12px;
    height: 3px;
    border: 1px solid #2020c8;
}

.handle {
    position: absolute;
    width: 8px;
    height: 8px;
    margin: -4px;
    border: 1px solid #5a7fb0;
    background: #fff;
}

.handle.round {
    width: 10px;
    height: 10px;
    margin: -5px;
    border-color: #666c78;
    border-radius: 50%;
}

.nw, .n, .ne { top: 0; }
.sw, .s, .se { bottom: 0; }
.nw, .w, .sw { left: 0; }
.ne, .e, .se { right: 0; }
.n, .s { left: 50%; }
.w, .e { top: 50%; }

.rotate {
    position: absolute;
    left: 50%;
    top: -29px;
    width: 10px;
    height: 10px;
    margin-left: -5px;
    border: 1px solid #5b7a5c;
    border-radius: 50%;
    background: #7fd83a;
}

.rotate::after {
    content: "";
    position: absolute;
    left: 4px;
    top: 9px;
    height: 15px;
    border-left: 1px dashed #4572a7;
}

.notes {
    display: flex;
    height: 57px;
    margin-top: 4px;
    border-top: 1px solid #6593cf;
    background: #fdfdfd;
}

.notes textarea {
    flex: 1;
    padding: 5px 9px;
    resize: none;
    color: #000;
    font-size: 15px;
    line-height: 22px;
    background: #fdfdfd;
}

.notes-scroll {
    display: flex;
    flex-direction: column;
    align-items: center;
    justify-content: space-between;
    width: 15px;
    padding: 5px 0;
    background: linear-gradient(90deg, #6b8fc4, #84a5d2);
}

.tri {
    border: 5px solid transparent;
    border-top-color: #5e6f92;
    border-bottom: 0;
}

.tri.up {
    border: 5px solid transparent;
    border-bottom-color: #5e6f92;
    border-top: 0;
}

/* status bar */
.status {
    display: flex;
    align-items: stretch;
    height: 22px;
    padding-left: 2px;
    border-top: 1px solid #5b84bd;
    line-height: 20px;
    color: #15307a;
    background: linear-gradient(#fff 1px, #d9e7fa 2px, #cadcf7 6px, #b3cff5 7px, #d5e5fa 19px);
}

.cell {
    display: flex;
    align-items: center;
    padding: 0 9px;
    border-right: 1px solid #8fb0de;
    box-shadow: 1px 0 0 #fff;
}

.lang {
    gap: 15px;
    padding-left: 6px;
}

.status-right {
    display: flex;
    align-items: center;
    margin-left: auto;
    padding-left: 5px;
    padding-right: 2px;
    border-left: 1px solid #7d9fd0;
    background: linear-gradient(#b9d2f4, #a3c2ee 7px, #82a8dc 8px, #9fc0ee);
}

.views {
    display: flex;
    height: 18px;
    margin-right: 8px;
    border: 1px solid #6f94c9;
    border-radius: 2px;
    background: linear-gradient(#cfdff6, #a9c5ec);
}

.views button {
    display: flex;
    align-items: center;
    justify-content: center;
    width: 18px;
}

.status label {
    width: 35px;
}

.round-btn {
    display: flex;
}

#zoom {
    width: 102px;
    height: 16px;
    margin: 0;
    appearance: none;
    background: linear-gradient(#e6effb, #e6effb) center / 100% 1px no-repeat,
        linear-gradient(#5a7db3, #5a7db3) center / 100% 3px no-repeat;
}

#zoom::-webkit-slider-thumb {
    appearance: none;
    width: 9px;
    height: 14px;
    border: 1px solid #46618f;
    border-radius: 1px 1px 5px 5px;
    background: #e6effb;
}

.fit {
    margin: 0 9px;
}
```
